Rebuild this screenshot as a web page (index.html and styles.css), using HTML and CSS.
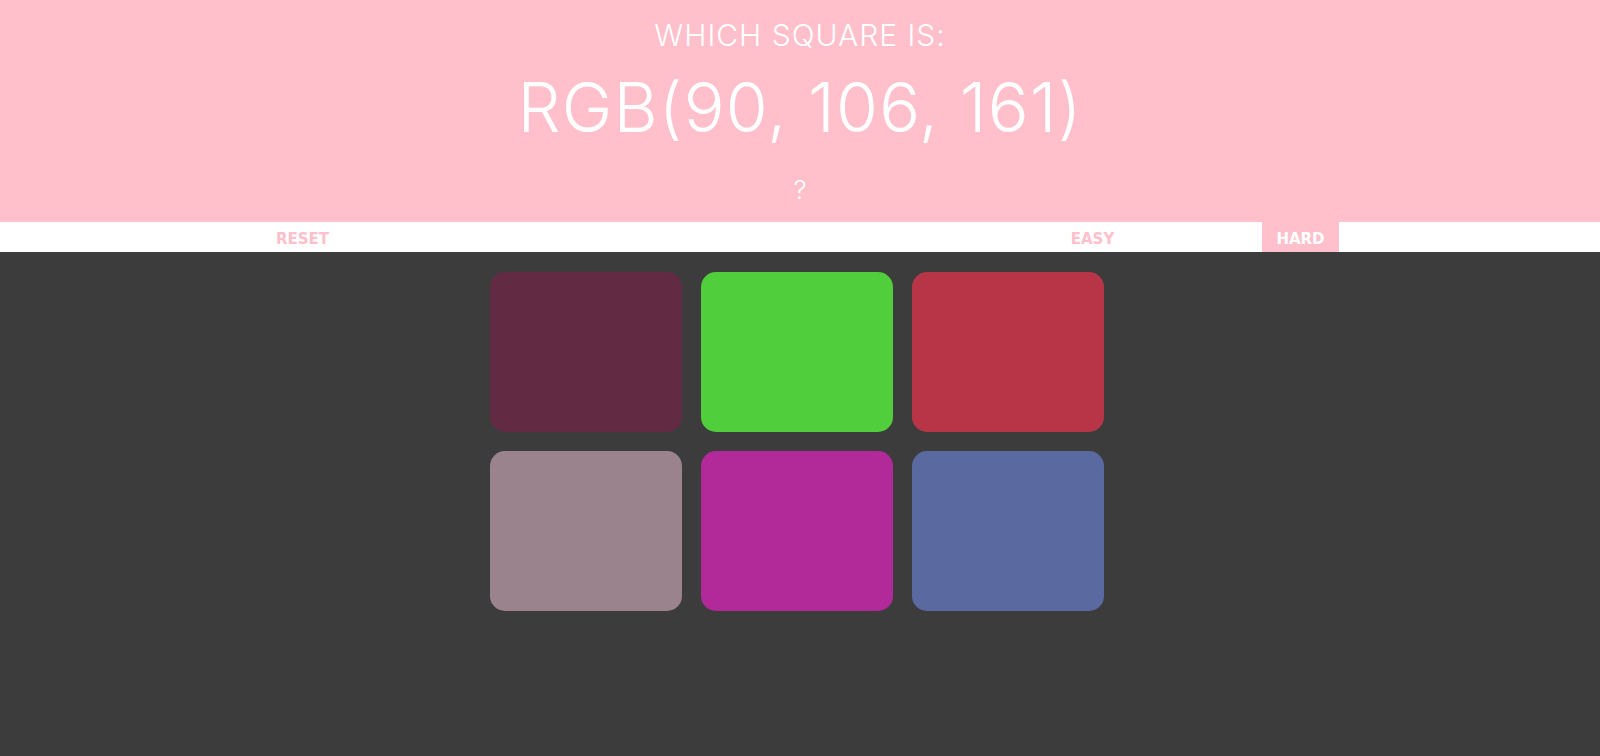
FILE: index.html
```html
<!DOCTYPE html>
<html lang="en">
<head>
<meta charset="utf-8">
<title>Colour Game</title>
<link rel="stylesheet" href="styles.css">
</head>
<body>
<header class="banner">
  <h1 class="title">
    <span class="kicker">Which square is:</span>
    <span class="target">RGB(90, 106, 161)</span>
    <span class="hint">?</span>
  </h1>
</header>
<nav class="stripe">
  <button class="btn reset">Reset</button>
  <span class="message"></span>
  <button class="btn mode">Easy</button>
  <button class="btn mode selected">Hard</button>
</nav>
<main class="board">
  <div class="square sq-1"></div>
  <div class="square sq-2"></div>
  <div class="square sq-3"></div>
  <div class="square sq-4"></div>
  <div class="square sq-5"></div>
  <div class="square sq-6"></div>
</main>
</body>
</html>
```
FILE: styles.css
```css
html, body {
  margin: 0;
  padding: 0;
}
body {
  background: #3c3c3c;
  font-family: "DejaVu Sans", sans-serif;
  height: 756px;
  overflow: hidden;
}
.banner {
  background: #ffc0cb;
  color: #fff;
  text-align: center;
  padding: 15px 0 17px;
}
.title {
  margin: 0;
  font-family: Inter, "DejaVu Sans", sans-serif;
  font-weight: 300;
  text-transform: uppercase;
}
.kicker {
  display: block;
  font-size: 30px;
  line-height: 40px;
  letter-spacing: 1px;
}
.target {
  display: block;
  font-size: 68px;
  line-height: 80px;
  margin-top: 12px;
  letter-spacing: 1.2px;
}
.hint {
  display: block;
  font-size: 26px;
  line-height: 30px;
  margin-top: 28px;
}
.stripe {
  background: #fff;
  height: 30px;
  display: flex;
  align-items: stretch;
  padding: 0 261px 0 264px;
}
.btn {
  border: none;
  background: none;
  width: 77px;
  padding: 4px 0 0;
  margin: 0;
  font-family: "DejaVu Sans", sans-serif;
  font-weight: 700;
  font-size: 15px;
  line-height: 26px;
  text-transform: uppercase;
  color: #ffc0cb;
  outline: none;
}
.message {
  flex: 1;
}
.mode + .mode {
  margin-left: 131px;
}
.selected {
  background: #ffc0cb;
  color: #fff;
}
.board {
  width: 640px;
  margin: 0 auto;
  padding-top: 10px;
  display: flex;
  flex-wrap: wrap;
}
.square {
  width: 30%;
  padding-bottom: 25%;
  margin: 1.5%;
  border-radius: 15px;
}
.sq-1 { background: #632a43; }
.sq-2 { background: #51ce3c; }
.sq-3 { background: #b83548; }
.sq-4 { background: #9b838d; }
.sq-5 { background: #b22a9a; }
.sq-6 { background: #5a6aa1; }
```
